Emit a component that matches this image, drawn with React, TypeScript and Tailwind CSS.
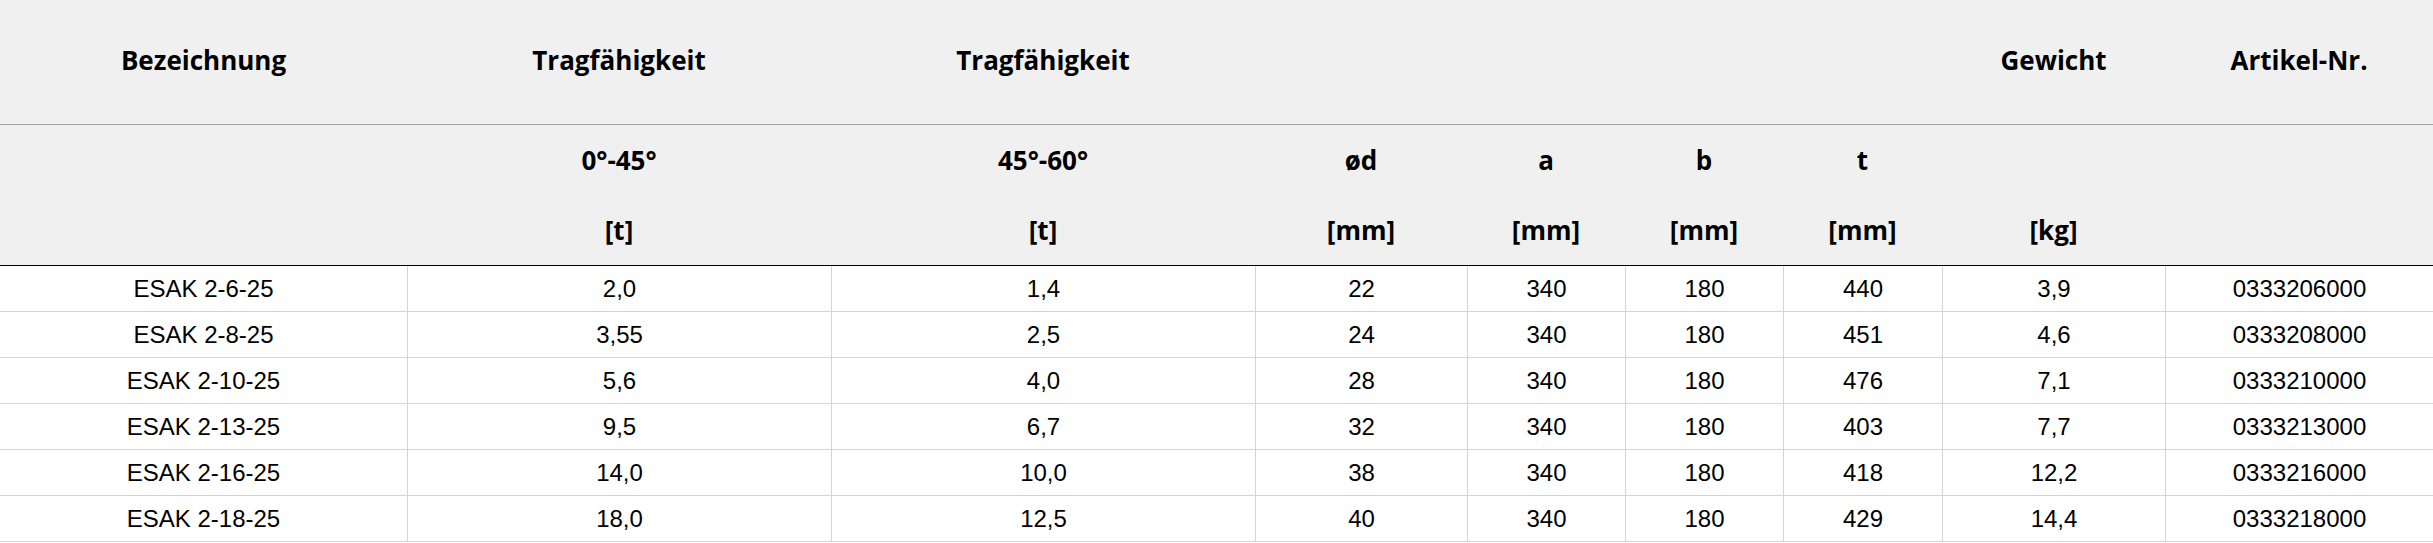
import React from 'react';

const cols = 'grid grid-cols-[407px_424px_424px_212px_158px_158px_159px_223px_268px]';

const head1 = ['Bezeichnung', 'Tragfähigkeit', 'Tragfähigkeit', '', '', '', '', 'Gewicht', 'Artikel-Nr.'];
const head2 = ['', '0°-45°', '45°-60°', 'ød', 'a', 'b', 't', '', ''];
const head3 = ['', '[t]', '[t]', '[mm]', '[mm]', '[mm]', '[mm]', '[kg]', ''];

const rows = [
  ['ESAK 2-6-25', '2,0', '1,4', '22', '340', '180', '440', '3,9', '0333206000'],
  ['ESAK 2-8-25', '3,55', '2,5', '24', '340', '180', '451', '4,6', '0333208000'],
  ['ESAK 2-10-25', '5,6', '4,0', '28', '340', '180', '476', '7,1', '0333210000'],
  ['ESAK 2-13-25', '9,5', '6,7', '32', '340', '180', '403', '7,7', '0333213000'],
  ['ESAK 2-16-25', '14,0', '10,0', '38', '340', '180', '418', '12,2', '0333216000'],
  ['ESAK 2-18-25', '18,0', '12,5', '40', '340', '180', '429', '14,4', '0333218000'],
];

export default function App() {
  return (
    <div className="w-[2433px] h-[543px] bg-white overflow-hidden text-black">
      {/* Kopfbereich */}
      <div className="bg-[#f0f0f0] font-['Open_Sans',sans-serif] font-bold text-[26px]">
        <div className={`${cols} h-[125px] items-center border-b border-[#a0a0a0]`}>
          {head1.map((h, i) => (
            <div key={i} className="text-center leading-none pb-1">{h}</div>
          ))}
        </div>
        <div className={`${cols} h-[141px] border-b border-black`}>
          {head2.map((h, i) => (
            <div key={i} className="flex flex-col items-center">
              <div className="h-[70px] pt-[20px] leading-[30px]">{h}</div>
              <div className="leading-[30px] pt-[20px]">{head3[i]}</div>
            </div>
          ))}
        </div>
      </div>

      {/* Tabelle */}
      <div className="font-['Liberation_Sans',Arial,sans-serif] text-[24px]">
        {rows.map((r, ri) => (
          <div key={ri} className={`${cols} h-[46px] border-b border-[#d4d4d4]`}>
            {r.map((c, ci) => (
              <div
                key={ci}
                className={`flex items-center justify-center ${ci > 0 ? 'border-l border-[#d4d4d4]' : ''}`}
              >
                {c}
              </div>
            ))}
          </div>
        ))}
      </div>
    </div>
  );
}
